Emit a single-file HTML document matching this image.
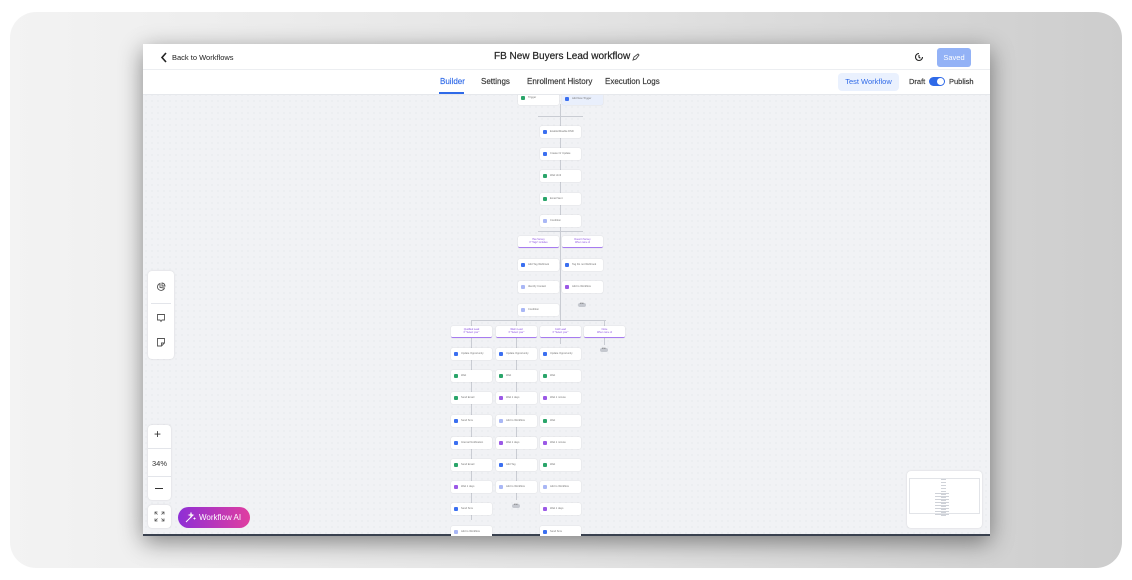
<!DOCTYPE html>
<html><head><style>
*{margin:0;padding:0;box-sizing:border-box}
body{width:1132px;height:580px;background:#fff;font-family:"Liberation Sans",sans-serif;position:relative;overflow:hidden}
.outer{position:absolute;left:10px;top:12px;width:1112px;height:556px;border-radius:26px;background:linear-gradient(90deg,#f3f3f3 0%,#e4e4e4 50%,#cdcdcd 100%)}
.win{position:absolute;left:143px;top:44px;width:847px;height:492px;background:#f1f2f5;box-shadow:0 6px 22px rgba(0,0,0,.45);overflow:hidden;
background-image:radial-gradient(#dfe1e6 0.6px,transparent 0.7px);background-size:6px 6px;border-bottom:2px solid #39414f}
.hdr{position:absolute;left:0;top:0;width:847px;height:26px;background:#fff;border-bottom:1px solid #eceef1}
.tabs{position:absolute;left:0;top:26px;width:847px;height:25px;background:#fff;border-bottom:1px solid #e6e8ec}
.t{position:absolute;font-size:8px;color:#222;white-space:nowrap}
.tabs .t{color:#333;-webkit-text-stroke:.15px #333}
.n{position:absolute;width:41px;height:12px;background:#fff;border-radius:2px;box-shadow:0 0 1px rgba(0,0,0,.18);font-size:2.6px;color:#777;padding:4px 0 0 10px;white-space:nowrap;overflow:hidden}
.n i{position:absolute;left:3px;top:4px;width:4px;height:4px;border-radius:1px;background:#3b6ff0}
.n.g i{background:#2aa56a}.n.p i{background:#9b59e6}.n.l i{background:#a9b7f5}
.b{position:absolute;width:41px;height:12px;background:#fff;border-radius:2px;border-bottom:1.5px solid #a77bf0;font-size:2.4px;color:#8a4ee0;text-align:center;padding-top:2px;line-height:3.4px;box-shadow:0 0 1px rgba(0,0,0,.18)}
.v{position:absolute;width:1px;background:#c9ccd3}
.h{position:absolute;height:1px;background:#c9ccd3}
.end{position:absolute;width:8px;height:4px;border-radius:2px;background:#c5c8cf;font-size:2px;color:#666;text-align:center}
.card{position:absolute;background:#fff;border-radius:4px;box-shadow:0 0 2px rgba(0,0,0,.12)}
</style></head><body>
<div class="outer"></div>
<div class="win">
 <div class="hdr">
  <svg style="position:absolute;left:17px;top:8px" width="8" height="11" viewBox="0 0 8 11"><path d="M6 1L2 5.5 6 10" fill="none" stroke="#222" stroke-width="1.6"/></svg>
  <div class="t" style="left:29px;top:9px;font-size:7.5px">Back to Workflows</div>
  <div class="t" style="left:351px;top:7px;font-size:10px;-webkit-text-stroke:.2px #222">FB New Buyers Lead workflow</div>
  <svg style="position:absolute;left:489px;top:9px" width="8" height="8" viewBox="0 0 8 8"><path d="M1 7l1-3 4-3 1 1-3 4z" fill="none" stroke="#444" stroke-width=".9"/></svg>
  <svg style="position:absolute;left:771px;top:8px" width="10" height="10" viewBox="0 0 10 10"><path d="M8.5 5A3.5 3.5 0 1 1 5 1.5M5 3v2.2l1.4 1" fill="none" stroke="#222" stroke-width="1.1"/></svg>
  <div style="position:absolute;left:794px;top:4px;width:34px;height:19px;border-radius:3px;background:#93b2f6;color:#fff;font-size:7.5px;text-align:center;line-height:19px">Saved</div>
 </div>
 <div class="tabs">
  <div class="t" style="left:297px;top:7px;color:#2f6ae8;-webkit-text-stroke:.15px #2f6ae8">Builder</div>
  <div style="position:absolute;left:296px;top:22px;width:25px;height:2px;background:#2f6ae8"></div>
  <div class="t" style="left:338px;top:7px">Settings</div>
  <div class="t" style="left:384px;top:7px">Enrollment History</div>
  <div class="t" style="left:462px;top:7px">Execution Logs</div>
  <div style="position:absolute;left:695px;top:3px;width:61px;height:18px;border-radius:4px;background:#eaf1fe;color:#2f6ae8;font-size:7.5px;text-align:center;line-height:18px">Test Workflow</div>
  <div class="t" style="left:766px;top:7px;font-size:7.5px">Draft</div>
  <div style="position:absolute;left:786px;top:7px;width:16px;height:9px;border-radius:5px;background:#2f6ae8"><div style="position:absolute;right:1px;top:1px;width:7px;height:7px;border-radius:50%;background:#fff"></div></div>
  <div class="t" style="left:806px;top:7px;font-size:7.5px">Publish</div>
 </div>
</div>
<div style="position:absolute;left:0;top:0;width:1132px;height:536px;overflow:hidden;clip-path:inset(95px 142px 0 143px)">
<div class="n g" style="left:518px;top:92px;height:13px"><i></i>Trigger</div>
<div class="n" style="left:562px;top:93px;background:#e9effc"><i class="l"></i>Add New Trigger</div>
<div class="v" style="left:560px;top:104px;height:240px"></div>
<div class="h" style="left:538px;top:116px;width:45px"></div>
<div class="n" style="left:540px;top:126px"><i></i>Enable/Disable DND</div>
<div class="n" style="left:540px;top:148px"><i></i>Create Or Update</div>
<div class="n g" style="left:540px;top:170px"><i></i>Wait Until</div>
<div class="n g" style="left:540px;top:193px"><i></i>Email Sent</div>
<div class="n l" style="left:540px;top:215px"><i></i>Condition</div>
<div class="h" style="left:538px;top:231px;width:45px"></div>
<div class="b" style="left:518px;top:236px">Has Survey<br>If "Tags" includes</div>
<div class="b" style="left:562px;top:236px">Doesn't Survey<br>When none of</div>
<div class="n" style="left:518px;top:259px"><i></i>Add Tag Webhook</div>
<div class="n" style="left:562px;top:259px"><i></i>Tag Do not Webhook</div>
<div class="n l" style="left:518px;top:281px"><i></i>Identify Contact</div>
<div class="n p" style="left:562px;top:281px"><i></i>Add to Workflow</div>
<div class="end" style="left:578px;top:303px">END</div>
<div class="n l" style="left:518px;top:304px"><i></i>Condition</div>
<div class="h" style="left:471px;top:320px;width:135px"></div>
<div class="v" style="left:471px;top:320px;height:200px"></div>
<div class="v" style="left:516px;top:320px;height:180px"></div>
<div class="v" style="left:604px;top:320px;height:25px"></div>
<div class="b" style="left:451px;top:326px">Qualified Lead<br>If "Select your"</div>
<div class="b" style="left:496px;top:326px">Warm Lead<br>If "Select your"</div>
<div class="b" style="left:540px;top:326px">Cold Lead<br>If "Select your"</div>
<div class="b" style="left:584px;top:326px">None<br>When none of</div>
<div class="end" style="left:600px;top:348px">END</div>
<div class="n" style="left:451px;top:348px"><i></i>Update Opportunity</div>
<div class="n" style="left:496px;top:348px"><i></i>Update Opportunity</div>
<div class="n" style="left:540px;top:348px"><i></i>Update Opportunity</div>
<div class="n g" style="left:451px;top:370px"><i></i>Wait</div>
<div class="n g" style="left:496px;top:370px"><i></i>Wait</div>
<div class="n g" style="left:540px;top:370px"><i></i>Wait</div>
<div class="n g" style="left:451px;top:392px"><i></i>Send Email</div>
<div class="n p" style="left:496px;top:392px"><i></i>Wait 1 days</div>
<div class="n p" style="left:540px;top:392px"><i></i>Wait 1 minute</div>
<div class="n" style="left:451px;top:415px"><i></i>Send Sms</div>
<div class="n l" style="left:496px;top:415px"><i></i>Add to Workflow</div>
<div class="n g" style="left:540px;top:415px"><i></i>Wait</div>
<div class="n" style="left:451px;top:437px"><i></i>Internal Notification</div>
<div class="n p" style="left:496px;top:437px"><i></i>Wait 1 days</div>
<div class="n p" style="left:540px;top:437px"><i></i>Wait 1 minute</div>
<div class="n g" style="left:451px;top:459px"><i></i>Send Email</div>
<div class="n" style="left:496px;top:459px"><i></i>Add Tag</div>
<div class="n g" style="left:540px;top:459px"><i></i>Wait</div>
<div class="n p" style="left:451px;top:481px"><i></i>Wait 1 days</div>
<div class="n l" style="left:496px;top:481px"><i></i>Add to Workflow</div>
<div class="n l" style="left:540px;top:481px"><i></i>Add to Workflow</div>
<div class="end" style="left:512px;top:504px">END</div>
<div class="n" style="left:451px;top:503px"><i></i>Send Sms</div>
<div class="n p" style="left:540px;top:503px"><i></i>Wait 1 days</div>
<div class="n l" style="left:451px;top:526px"><i></i>Add to Workflow</div>
<div class="n" style="left:540px;top:526px"><i></i>Send Sms</div>
</div>
<div class="card" style="left:148px;top:271px;width:26px;height:88px">
 <svg style="position:absolute;left:8px;top:11px" width="10" height="10" viewBox="0 0 10 10"><path d="M8.5 6A3.6 3.6 0 1 1 4 1.4V5.5zM6 1a3.5 3.5 0 0 1 3 3H6z" fill="none" stroke="#555" stroke-width=".9"/></svg>
 <div style="position:absolute;left:3px;top:32px;width:20px;height:1px;background:#e3e5ea"></div>
 <svg style="position:absolute;left:8px;top:42px" width="10" height="10" viewBox="0 0 10 10"><path d="M1.5 1.5h7v5.5H6L5 8.5 4 7H1.5z" fill="none" stroke="#555" stroke-width=".9"/></svg>
 <svg style="position:absolute;left:8px;top:66px" width="10" height="10" viewBox="0 0 10 10"><path d="M1.5 1.5h7v4.5l-3 3h-4zM5.5 8.5V6h3" fill="none" stroke="#555" stroke-width=".9"/></svg>
</div>
<div class="card" style="left:148px;top:425px;width:23px;height:75px">
 <div class="t" style="left:6px;top:2px;font-size:12px;color:#333">+</div>
 <div style="position:absolute;left:0;top:23px;width:23px;height:1px;background:#e3e5ea"></div>
 <div class="t" style="left:4px;top:34px;font-size:7.5px;color:#333">34%</div>
 <div style="position:absolute;left:0;top:51px;width:23px;height:1px;background:#e3e5ea"></div>
 <div style="position:absolute;left:7px;top:63px;width:8px;height:1.2px;background:#333"></div>
</div>
<div class="card" style="left:148px;top:505px;width:23px;height:23px">
 <svg style="position:absolute;left:6px;top:6px" width="11" height="11" viewBox="0 0 11 11"><path d="M1 3.5V1h2.5M1 1l2.5 2.5M10 3.5V1H7.5M10 1L7.5 3.5M1 7.5V10h2.5M1 10l2.5-2.5M10 7.5V10H7.5M10 10L7.5 7.5" fill="none" stroke="#555" stroke-width=".8"/></svg>
</div>
<div style="position:absolute;left:178px;top:507px;width:72px;height:21px;border-radius:11px;background:linear-gradient(90deg,#8e2fd6,#e03ea0);color:#fff;font-size:8px;line-height:21px;padding-left:21px">Workflow AI</div>
<svg style="position:absolute;left:185px;top:512px" width="11" height="11" viewBox="0 0 11 11"><path d="M1 10L8 3M6 1l.5 1.5L8 3l-1.5.5L6 5 5.5 3.5 4 3l1.5-.5zM9.5 5.5v2M8.5 6.5h2" fill="none" stroke="#fff" stroke-width=".9"/></svg>
<div class="card" style="left:907px;top:471px;width:75px;height:57px">
 <div style="position:absolute;left:2px;top:7px;width:71px;height:36px;border:1px solid #e2e4e8"></div>
 <div style="position:absolute;left:34px;top:8px;width:5px;height:38px;background:repeating-linear-gradient(#cfd2d8 0 1px,transparent 1px 3px)"></div>
 <div style="position:absolute;left:28px;top:22px;width:14px;height:22px;background:repeating-linear-gradient(#cfd2d8 0 1px,transparent 1px 3px)"></div>
</div>
</body></html>
